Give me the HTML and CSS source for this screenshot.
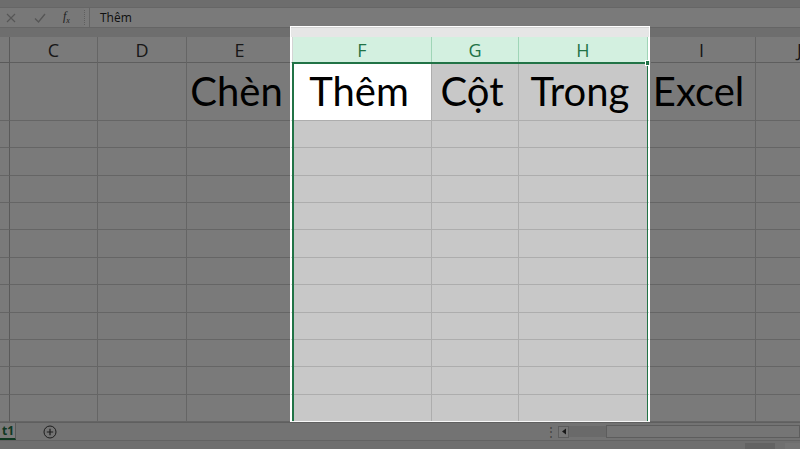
FILE: index.html
```html
<!DOCTYPE html>
<html lang="vi">
<head>
<meta charset="utf-8">
<title>Chèn Thêm Cột Trong Excel</title>
<link rel="stylesheet" href="styles.css">
</head>
<body>
<div class="app">
  <div class="ribbon-edge"></div>
  <div class="fbar">
    <div class="fbtns">
      <svg class="ico" width="12" height="12" viewBox="0 0 12 12"><path d="M2 2 L10 10 M10 2 L2 10" stroke="#b3b3b3" stroke-width="1.2" fill="none"/></svg>
      <svg class="ico" width="14" height="12" viewBox="0 0 14 12"><path d="M2 6.5 L5.5 10 L12 2" stroke="#b3b3b3" stroke-width="1.4" fill="none"/></svg>
      <span class="fx"><i>f</i><sub>x</sub></span>
    </div>
    <div class="fsep"></div>
    <div class="finput">Thêm</div>
  </div>
  <div class="gap"></div>
  <div class="sheet">
    <div class="corner"></div><div class="h">C</div><div class="h">D</div><div class="h">E</div><div class="h hs">F</div><div class="h hs">G</div><div class="h hs">H</div><div class="h">I</div><div class="h">J</div>

    <div class="rh"></div><div class="c"></div><div class="c"></div><div class="c big">Chèn</div><div class="c a big">Thêm</div><div class="c s big">Cột</div><div class="c s big">Trong</div><div class="c big">Excel</div><div class="c"></div>

    <div class="rh"></div><div class="c"></div><div class="c"></div><div class="c"></div><div class="c s"></div><div class="c s"></div><div class="c s"></div><div class="c"></div><div class="c"></div>
    <div class="rh"></div><div class="c"></div><div class="c"></div><div class="c"></div><div class="c s"></div><div class="c s"></div><div class="c s"></div><div class="c"></div><div class="c"></div>
    <div class="rh"></div><div class="c"></div><div class="c"></div><div class="c"></div><div class="c s"></div><div class="c s"></div><div class="c s"></div><div class="c"></div><div class="c"></div>
    <div class="rh"></div><div class="c"></div><div class="c"></div><div class="c"></div><div class="c s"></div><div class="c s"></div><div class="c s"></div><div class="c"></div><div class="c"></div>
    <div class="rh"></div><div class="c"></div><div class="c"></div><div class="c"></div><div class="c s"></div><div class="c s"></div><div class="c s"></div><div class="c"></div><div class="c"></div>
    <div class="rh"></div><div class="c"></div><div class="c"></div><div class="c"></div><div class="c s"></div><div class="c s"></div><div class="c s"></div><div class="c"></div><div class="c"></div>
    <div class="rh"></div><div class="c"></div><div class="c"></div><div class="c"></div><div class="c s"></div><div class="c s"></div><div class="c s"></div><div class="c"></div><div class="c"></div>
    <div class="rh"></div><div class="c"></div><div class="c"></div><div class="c"></div><div class="c s"></div><div class="c s"></div><div class="c s"></div><div class="c"></div><div class="c"></div>
    <div class="rh"></div><div class="c"></div><div class="c"></div><div class="c"></div><div class="c s"></div><div class="c s"></div><div class="c s"></div><div class="c"></div><div class="c"></div>
    <div class="rh"></div><div class="c"></div><div class="c"></div><div class="c"></div><div class="c s"></div><div class="c s"></div><div class="c s"></div><div class="c"></div><div class="c"></div>
    <div class="rh"></div><div class="c"></div><div class="c"></div><div class="c"></div><div class="c s"></div><div class="c s"></div><div class="c s"></div><div class="c"></div><div class="c"></div>

    <div class="selframe"></div>
  </div>
  <div class="tabs">
    <div class="tab">t1</div>
    <div class="addsheet">
      <svg width="14" height="14" viewBox="0 0 14 14"><circle cx="7" cy="7" r="6" stroke="#3c3c3c" stroke-width="1" fill="none"/><path d="M7 3.8 V10.2 M3.8 7 H10.2" stroke="#3c3c3c" stroke-width="1.2"/></svg>
    </div>
    <div class="spacer"></div>
    <div class="vdots">⋮</div>
    <div class="hscroll">
      <div class="sbtn">
        <svg width="6" height="7" viewBox="0 0 6 7"><path d="M5 0.5 L1 3.5 L5 6.5 Z" fill="#333"/></svg>
      </div>
      <div class="sthumb"></div>
      <div class="strack"></div>
    </div>
  </div>
  <div class="status">
    <div class="spacer"></div>
    <div class="vbtn on"></div>
    <div class="vbtn last"></div>
  </div>
  <div class="spot"></div>
</div>
</body>
</html>
```

FILE: styles.css
```css
html, body {
  margin: 0;
  padding: 0;
}
body {
  width: 800px;
  height: 449px;
  overflow: hidden;
  font-family: Lato, "Liberation Sans", sans-serif;
  background: #e6e6e6;
}
.app {
  position: relative;
  width: 800px;
  height: 449px;
  display: flex;
  flex-direction: column;
  overflow: hidden;
  background: #e6e6e6;
}
.ribbon-edge {
  height: 8px;
  background: #e4e4e4;
  border-bottom: 1px solid #d6d6d6;
  box-sizing: border-box;
}
.fbar {
  height: 20px;
  display: flex;
  align-items: stretch;
  background: #fff;
  border-bottom: 1px solid #d4d4d4;
  box-sizing: border-box;
}
.fbtns {
  width: 84px;
  display: flex;
  align-items: center;
  padding-left: 5px;
  gap: 16px;
  box-sizing: border-box;
  background: #fbfbfb;
}
.fx {
  font-family: "Liberation Serif", serif;
  font-size: 12px;
  color: #444;
}
.fx sub { font-size: 8px; font-style: italic; }
.fsep {
  width: 2px;
  border-left: 1px dotted #c6c6c6;
  margin: 2px 0;
}
.finput {
  flex: 1;
  margin-left: 2px;
  border-left: 1px solid #d4d4d4;
  padding-left: 10px;
  font-family: "Open Sans", "Noto Sans", sans-serif;
  font-size: 12px;
  color: #222;
  line-height: 19px;
}
.gap {
  height: 9px;
  background: #e6e6e6;
}
.sheet {
  position: relative;
  display: grid;
  grid-template-columns: 10px 88px 89px 106px 139px 87px 129px 108px 88px;
  grid-template-rows: 26px 58px repeat(11, 27.36px);
  background: #fff;
  height: 385px;
  overflow: hidden;
}
.corner {
  background: #fff;
  border-right: 1px solid #bdbdbd;
  border-bottom: 1px solid #bdbdbd;
}
.h {
  background: #fff;
  border-right: 1px solid #d4d4d4;
  border-bottom: 1px solid #c4c4c4;
  display: flex;
  align-items: center;
  justify-content: center;
  font-family: "Open Sans", "Noto Sans", sans-serif;
  font-size: 18px;
  color: #333;
  padding-top: 1px;
  box-sizing: border-box;
}
.h.hs {
  background: #d3f0e0;
  color: #217346;
  border-right-color: #9fd5b7;
}
.rh {
  background: #fff;
  border-right: 1px solid #bdbdbd;
  border-bottom: 1px solid #d4d4d4;
  box-shadow: 2px 0 0 #e0e0e0;
}
.c {
  background: #fff;
  border-right: 1px solid #d4d4d4;
  border-bottom: 1px solid #d4d4d4;
}
.c.s {
  background: #c8c8c8;
  border-right-color: #adadad;
  border-bottom-color: #adadad;
}
.c.a {
  background: #fff;
  border-right-color: #adadad;
  border-bottom-color: #adadad;
}
.big {
  font-family: Lato, "Liberation Sans", sans-serif;
  font-size: 40px;
  line-height: 1;
  color: #000;
  display: flex;
  align-items: flex-end;
  justify-content: center;
  padding-bottom: 9px;
  box-sizing: border-box;
  padding-right: 6px;
}
.selframe {
  position: absolute;
  grid-column: 5 / 8;
  grid-row: 2 / 14;
  top: -1px;
  left: -1px;
  right: 0;
  bottom: 0;
  border-left: 2px solid #217346;
  border-top: 2px solid #217346;
  border-right: 1px solid #217346;
  pointer-events: none;
}
.selframe::after {
  content: "";
  position: absolute;
  right: -4px;
  top: -4px;
  width: 4px;
  height: 4px;
  background: #217346;
  border: 1px solid #fff;
}
.tabs {
  height: 18px;
  display: flex;
  align-items: stretch;
  background: #f0f0f0;
  border-top: 1px solid #c6c6c6;
  box-sizing: border-box;
}
.tab {
  width: 16px;
  background: #fff;
  border-right: 1px solid #bdbdbd;
  border-bottom: 2px solid #217346;
  box-sizing: border-box;
  font-family: "Open Sans", sans-serif;
  font-size: 12px;
  font-weight: bold;
  color: #217346;
  line-height: 15px;
  text-align: right;
  padding-right: 1px;
  overflow: hidden;
  white-space: nowrap;
}
.addsheet {
  width: 68px;
  display: flex;
  align-items: center;
  justify-content: center;
}
.spacer { flex: 1; }
.vdots {
  width: 14px;
  font-size: 12px;
  color: #8a8a8a;
  line-height: 17px;
  text-align: center;
}
.hscroll {
  width: 242px;
  display: flex;
  align-items: center;
}
.sbtn {
  width: 11px;
  height: 12px;
  border: 1px solid #c2c2c2;
  background: #f7f7f7;
  display: flex;
  align-items: center;
  justify-content: center;
  box-sizing: border-box;
}
.sthumb {
  width: 37px;
  height: 11px;
  background: #dedede;
}
.strack {
  flex: 1;
  height: 13px;
  background: #f5f5f5;
  border: 1px solid #c2c2c2;
  box-sizing: border-box;
}
.status {
  height: 9px;
  display: flex;
  align-items: flex-end;
  background: #e9e9e9;
  border-top: 1px solid #cfcfcf;
  box-sizing: border-box;
}
.vbtn {
  width: 30px;
  height: 6px;
  background: #f2f2f2;
  margin-right: 10px;
}
.vbtn.on { background: #cfcfcf; }
.vbtn.last { width: 15px; margin-right: 0; }
.spot {
  position: absolute;
  left: 290px;
  top: 26px;
  width: 360px;
  height: 396px;
  box-sizing: border-box;
  border: 1px solid rgba(255, 255, 255, 0.9);
  box-shadow: 0 0 0 1200px rgba(0, 0, 0, 0.52);
  pointer-events: none;
}
```
